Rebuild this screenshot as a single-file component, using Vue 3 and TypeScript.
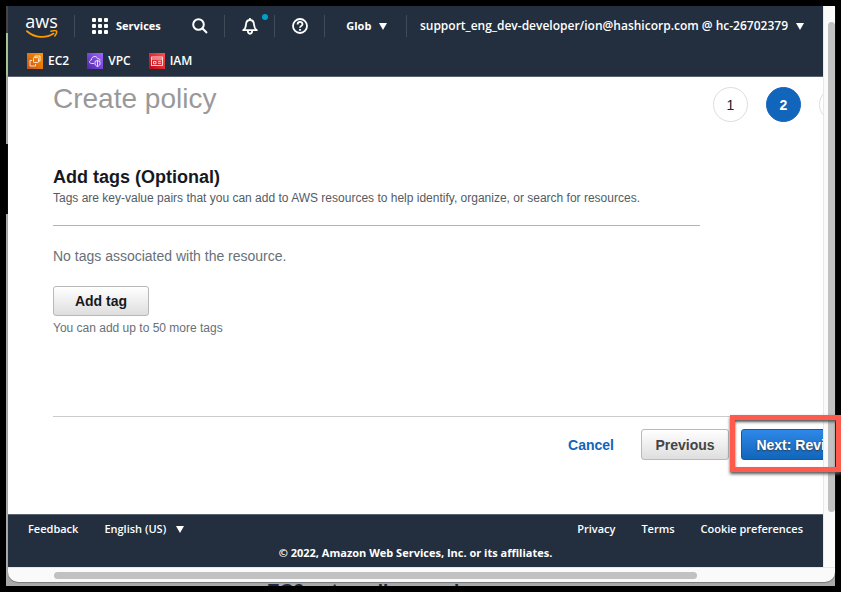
<script setup lang="ts">
interface Shortcut { label: string; kind: 'ec2' | 'vpc' | 'iam' }

const shortcuts: Shortcut[] = [
  { label: 'EC2', kind: 'ec2' },
  { label: 'VPC', kind: 'vpc' },
  { label: 'IAM', kind: 'iam' },
]
const steps: number[] = [1, 2, 3]
const currentStep = 2
const footerLinks: string[] = ['Privacy', 'Terms', 'Cookie preferences']
</script>

<template>
  <div class="screen">
    <div class="desktop">
      <div class="window">
        <div class="page">
          <header class="header">
            <nav class="bar">
              <a href="#" class="logo" aria-label="AWS home">
                <span class="logo-text">aws</span>
                <svg class="smile" viewBox="0 0 32 9" width="32" height="9" aria-hidden="true">
                  <path d="M1 1.2C9 8.2 20 8.6 27.5 3.6" fill="none" stroke="#f90" stroke-width="1.8" stroke-linecap="round" />
                  <path d="M25 1.3C27.5 .6 30 .4 30.6 1.2C31 2.5 30 4.6 28.8 6" fill="none" stroke="#f90" stroke-width="1.5" stroke-linecap="round" />
                </svg>
              </a>
              <button type="button" class="item services">
                <svg viewBox="0 0 16 16" width="16" height="16" fill="#fff" aria-hidden="true">
                  <g v-for="r in 3" :key="r">
                    <rect v-for="c in 3" :key="c" :x="(c - 1) * 6" :y="(r - 1) * 6" width="4" height="4" rx="1" />
                  </g>
                </svg>
                <span>Services</span>
              </button>
              <button type="button" class="item search" aria-label="Search">
                <svg viewBox="0 0 16 16" width="16" height="16" fill="none" stroke="#fff" stroke-width="2" aria-hidden="true">
                  <circle cx="6.5" cy="6.5" r="5.3" />
                  <path d="M10.3 10.3L15 15" />
                </svg>
              </button>
              <button type="button" class="item icon" aria-label="Notifications">
                <svg viewBox="0 0 16 17" width="16" height="17" fill="none" stroke="#fff" stroke-width="1.8" stroke-linejoin="round" aria-hidden="true">
                  <path d="M8 0V2M1.2 12.2H14.8C12.6 10.8 12.2 9.2 12 6.5C11.8 3.6 10.4 2 8 2S4.2 3.6 4 6.5C3.8 9.2 3.4 10.8 1.2 12.2Z" />
                  <path d="M5.8 12.5C5.8 16.8 10.2 16.8 10.2 12.5" />
                </svg>
                <span class="dot"></span>
              </button>
              <button type="button" class="item icon" aria-label="Help">
                <svg viewBox="0 0 16 16" width="16" height="16" fill="none" stroke="#fff" stroke-width="1.8" aria-hidden="true">
                  <circle cx="8" cy="8" r="7" />
                  <path d="M5.6 6.4C5.6 3.2 10.5 3.2 10.5 6.2C10.5 7.9 8 7.9 8 9.8M8 11V12.7" />
                </svg>
              </button>
              <button type="button" class="item region"><span>Glob</span><i class="caret"></i></button>
              <button type="button" class="item account">
                <span>support_eng_dev-developer/ion@hashicorp.com @ hc-26702379</span><i class="caret"></i>
              </button>
            </nav>
            <nav class="shortcuts">
              <a v-for="s in shortcuts" :key="s.kind" href="#" class="shortcut">
                <svg :class="['tile', s.kind]" viewBox="0 0 16 16" width="16" height="16" fill="none" stroke="#fff" stroke-width=".8" aria-hidden="true">
                  <template v-if="s.kind === 'ec2'">
                    <rect x="6.5" y="4.5" width="5" height="5" rx="1" />
                    <path d="M5 7.5H3V13H8.5V11M8 4.5V3H13V8H11.5" />
                  </template>
                  <template v-else-if="s.kind === 'vpc'">
                    <path d="M7 10.5H4.5C2 10.5 2 7.3 4.4 7C4.4 3 9.6 2.2 10.5 5.6C12.5 5.4 13.2 6.8 13 7.5" />
                    <path d="M8 8.5L10.5 7.5L13 8.5V11C13 12.5 10.5 13.5 10.5 13.5S8 12.5 8 11ZM10.5 7.5V13.5" />
                  </template>
                  <template v-else>
                    <rect x="2.5" y="4" width="11" height="8.5" />
                    <path d="M2.5 6H13.5M4.5 10.8V8.5H7V10.8ZM9 8.3H12M9 10.3H12" />
                  </template>
                </svg>
                <span>{{ s.label }}</span>
              </a>
            </nav>
          </header>

          <main class="main">
            <div class="title-row">
              <h1>Create policy</h1>
              <ol class="steps">
                <li v-for="n in steps" :key="n" :class="{ active: n === currentStep }">{{ n }}</li>
              </ol>
            </div>
            <section class="tags">
              <h2>Add tags (Optional)</h2>
              <p class="hint">Tags are key-value pairs that you can add to AWS resources to help identify, organize, or search for resources.</p>
              <hr>
              <p class="empty">No tags associated with the resource.</p>
              <button type="button" class="btn add">Add tag</button>
              <p class="limit">You can add up to 50 more tags</p>
            </section>
            <div class="actions">
              <a href="#" class="cancel">Cancel</a>
              <button type="button" class="btn previous">Previous</button>
              <button type="button" class="btn primary">Next: Review</button>
            </div>
          </main>

          <footer class="footer">
            <div class="footer-row">
              <a href="#">Feedback</a>
              <button type="button" class="language">English (US)<i class="caret"></i></button>
              <span class="spacer"></span>
              <a v-for="l in footerLinks" :key="l" href="#">{{ l }}</a>
            </div>
            <p class="copyright">© 2022, Amazon Web Services, Inc. or its affiliates.</p>
          </footer>
        </div>
        <div class="vscroll"><div class="thumb"></div></div>
        <div class="hscroll"><div class="thumb"></div></div>
      </div>
      <div class="behind">EC2 auto policy version</div>
    </div>
    <div class="highlight"></div>
  </div>
</template>

<style>
body { margin: 0; background: #000; }
</style>

<style scoped>
* { box-sizing: border-box; }
h1, h2, p, ol { margin: 0; padding: 0; }
button { font: inherit; color: inherit; background: none; border: 0; padding: 0; margin: 0; cursor: pointer; }
a { color: inherit; text-decoration: none; }
.screen { position: relative; display: flex; height: 100vh; padding: 6px; background: #000; overflow: hidden; font-family: "Liberation Sans", Arial, sans-serif; }
.desktop { position: relative; display: flex; flex-direction: column; flex: 1; min-width: 0; padding-left: 2px; background: linear-gradient(#453f3d 0 27px, #a9c795 27px 69px, #aaa 69px 138px, #000 138px 208px, #aaa 208px); }
.window { display: grid; grid-template-columns: minmax(0, 1fr) 12px; grid-template-rows: minmax(0, 1fr) 15px; flex: 1; min-height: 0; background: #fafafa; border-radius: 0 0 10px 10px; overflow: hidden; box-shadow: 0 1px 1px #777; }
.page { display: flex; flex-direction: column; min-width: 0; overflow: hidden; background: #fff; }
.header, .footer { flex: none; background: #232f3e; color: #fff; font: 700 11px/16px "Open Sans", "Noto Sans", sans-serif; }
.header { height: 71px; border-bottom: 1px solid #596270; }
.bar { display: flex; align-items: center; height: 40px; padding-left: 17px; }
.bar > * + * { height: 22px; }
.logo { display: flex; flex-direction: column; align-items: center; width: 33px; margin-right: 16px; }
.logo-text { font: 500 18px/17px "Open Sans", sans-serif; }
.item { display: flex; align-items: center; justify-content: center; gap: 8px; flex: none; white-space: nowrap; }
.services { border-left: 1px solid #414a57; padding-left: 17px; }
.search { width: 63px; padding-left: 16px; }
.icon { position: relative; width: 50px; border-left: 1px solid #414a57; padding-left: 2px; }
.dot { position: absolute; right: 6px; top: -1px; width: 6px; height: 6px; border-radius: 50%; background: #00a1c9; }
.region { width: 83px; border-left: 1px solid #414a57; border-right: 1px solid #414a57; padding-left: 3px; }
.account { margin-left: auto; margin-right: 19px; font-size: 12px; font-weight: 600; }
.caret { display: inline-block; border: 4px solid transparent; border-top: 7px solid #fff; border-bottom: 0; }
.shortcuts { display: flex; gap: 18px; padding: 7px 0 0 19px; font-size: 12px; font-weight: 600; }
.shortcut { display: flex; align-items: center; gap: 5px; }
.tile.ec2 { background: linear-gradient(45deg, #c8511b, #f90); }
.tile.vpc { background: linear-gradient(45deg, #4d27a8, #a166ff); }
.tile.iam { background: linear-gradient(45deg, #bd0816, #ff5252); }
.main { flex: 1; display: flex; flex-direction: column; padding-left: 45px; min-height: 0; }
.title-row { display: flex; justify-content: space-between; padding-top: 6px; }
h1 { font-size: 28px; font-weight: 400; line-height: 32px; color: #999; }
.steps { display: flex; gap: 18px; list-style: none; padding-top: 4px; margin-right: -31px; }
.steps li { display: flex; align-items: center; justify-content: center; width: 35px; height: 35px; border: 1px solid #ddd; border-radius: 50%; font-size: 14px; color: #222; }
.steps .active { background: #1166bb; border-color: #1166bb; color: #fff; font-weight: 700; }
.tags { padding-top: 44px; margin-right: 123px; }
h2 { font-size: 18px; line-height: 22px; color: #16191f; }
.hint { font-size: 12px; line-height: 20px; color: #545b64; white-space: nowrap; }
hr { height: 1px; margin: 17px 0 0; border: 0; background: #aab7b8; }
.empty { margin-top: 20px; font-size: 14px; line-height: 20px; color: #687078; }
.btn { height: 30px; border: 1px solid #b8b8b8; border-radius: 3px; background: linear-gradient(#fff, #dedede); font-size: 14px; font-weight: 700; color: #16191f; white-space: nowrap; }
.add { display: block; width: 96px; margin-top: 20px; }
.limit { margin-top: 2px; font-size: 12px; line-height: 20px; color: #687078; }
.actions { display: flex; align-items: center; justify-content: flex-end; margin-top: auto; margin-bottom: 54px; padding-top: 12px; border-top: 1px solid #ccc; }
.cancel { margin-right: 27px; font-size: 14px; font-weight: 700; color: #1166bb; }
.previous { width: 88px; height: 31px; margin-right: 12px; color: #444; }
.primary { width: 118px; height: 31px; margin-right: -36px; background: linear-gradient(#2f88e8, #1166bb); border-color: #1059a5; color: #fff; text-shadow: 0 1px 2px #333; }
.footer { height: 53px; padding-top: 6px; border-top: 1px solid #596270; }
.footer-row { display: flex; gap: 26px; padding: 0 20px; font-weight: 600; }
.language { display: flex; align-items: center; gap: 10px; }
.spacer { flex: 1; }
.copyright { margin-top: 8px; text-align: center; }
.vscroll { padding: 16px 0 55px 4px; border-left: 1px solid #e8e8e8; }
.hscroll { grid-column: 1 / -1; padding: 4px 138px 3px 46px; border-top: 1px solid #e8e8e8; }
.thumb { height: 100%; background: #c1c1c1; border-radius: 4px; }
.behind { height: 4px; padding-left: 259px; overflow: hidden; font-size: 19px; font-weight: 700; line-height: 18px; color: #1d2747; }
.highlight { position: absolute; left: 730px; top: 415px; width: 111px; height: 57px; border: 5px solid #ff5a4b; box-shadow: 0 2px 3px #555, inset 0 2px 3px #555; }
</style>
